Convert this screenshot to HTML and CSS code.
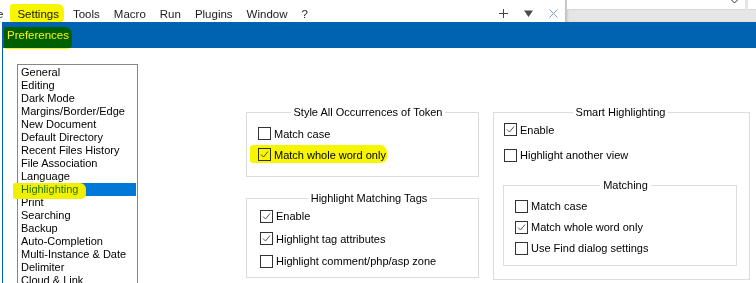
FILE: index.html
```html
<!DOCTYPE html>
<html lang="en">
<head>
    <meta charset="UTF-8">
    <title>Preferences</title>
    <link rel="stylesheet" href="styles.css">
</head>
<body>
    <div class="topbar">
        <div class="menubar">
            <span class="menu cut">e</span>
            <span class="menu marked">Settings</span>
            <span class="menu">Tools</span>
            <span class="menu">Macro</span>
            <span class="menu">Run</span>
            <span class="menu">Plugins</span>
            <span class="menu">Window</span>
            <span class="menu">?</span>
            <div class="tabtools">
                <svg width="9" height="9" viewBox="0 0 9 9"><path d="M4.5 0v9M0 4.5h9" stroke="#444" stroke-width="1"/></svg>
                <svg width="9" height="9" viewBox="0 0 9 9"><path d="M0 1.5h9L4.5 8z" fill="#4a4a4a"/></svg>
                <svg width="9" height="9" viewBox="0 0 9 9"><path d="M0.5 0.5l8 8M8.5 0.5l-8 8" stroke="#7f9fc0" stroke-width="1"/></svg>
            </div>
        </div>
        <div class="side">
            <div class="combo">
                <svg width="9" height="4" viewBox="0 0 9 4"><path d="M0.5 -1L4.5 3L8.5 -1" fill="none" stroke="#333" stroke-width="1"/></svg>
            </div>
            <div class="combo small"></div>
        </div>
    </div>

    <div class="dialog">
        <div class="titlebar"><span class="title">Preferences</span></div>
        <div class="body">
            <ul class="pagelist">
                <li>General</li>
                <li>Editing</li>
                <li>Dark Mode</li>
                <li>Margins/Border/Edge</li>
                <li>New Document</li>
                <li>Default Directory</li>
                <li>Recent Files History</li>
                <li>File Association</li>
                <li>Language</li>
                <li class="selected"><span>Highlighting</span></li>
                <li>Print</li>
                <li>Searching</li>
                <li>Backup</li>
                <li>Auto-Completion</li>
                <li>Multi-Instance &amp; Date</li>
                <li>Delimiter</li>
                <li>Cloud &amp; Link</li>
                <li>Search Engine</li>
            </ul>

            <div class="col left">
                <fieldset class="group token">
                    <legend>Style All Occurrences of Token</legend>
                    <div class="opt"><span class="box"></span>Match case</div>
                    <div class="opt marked-row"><span class="box"><svg width="11" height="11" viewBox="0 0 11 11"><path d="M2 5.5L4.5 8L9 2.5" fill="none" stroke="#555" stroke-width="1"/></svg></span>Match whole word only</div>
                </fieldset>
                <fieldset class="group tags">
                    <legend>Highlight Matching Tags</legend>
                    <div class="opt"><span class="box"><svg width="11" height="11" viewBox="0 0 11 11"><path d="M2 5.5L4.5 8L9 2.5" fill="none" stroke="#555" stroke-width="1"/></svg></span>Enable</div>
                    <div class="opt"><span class="box"><svg width="11" height="11" viewBox="0 0 11 11"><path d="M2 5.5L4.5 8L9 2.5" fill="none" stroke="#555" stroke-width="1"/></svg></span>Highlight tag attributes</div>
                    <div class="opt"><span class="box"></span>Highlight comment/php/asp zone</div>
                </fieldset>
            </div>

            <div class="col right">
                <fieldset class="group smart">
                    <legend>Smart Highlighting</legend>
                    <div class="opt"><span class="box"><svg width="11" height="11" viewBox="0 0 11 11"><path d="M2 5.5L4.5 8L9 2.5" fill="none" stroke="#555" stroke-width="1"/></svg></span>Enable</div>
                    <div class="opt second"><span class="box"></span>Highlight another view</div>
                    <fieldset class="group matching">
                        <legend>Matching</legend>
                        <div class="opt"><span class="box"></span>Match case</div>
                        <div class="opt"><span class="box"><svg width="11" height="11" viewBox="0 0 11 11"><path d="M2 5.5L4.5 8L9 2.5" fill="none" stroke="#555" stroke-width="1"/></svg></span>Match whole word only</div>
                        <div class="opt"><span class="box"></span>Use Find dialog settings</div>
                    </fieldset>
                </fieldset>
            </div>
        </div>
    </div>
</body>
</html>
```

FILE: styles.css
```css
body {
    margin: 0;
    width: 756px;
    height: 283px;
    overflow: hidden;
    background: #fff;
    font-family: "Liberation Sans", Arial, sans-serif;
    color: #000;
}

/* Top strip (main window menu) */
.topbar {
    display: flex;
    height: 22px;
}
.menubar {
    flex: none;
    width: 565px;
    box-sizing: border-box;
    height: 22px;
    padding-top: 6px;
    display: flex;
    font-size: 11.5px;
    color: #1a1a1a;
}
.menu {
    position: relative;
    padding: 0 7px;
    line-height: 16px;
}
.menu.cut {
    margin-left: -10px;
}
.menu.marked::after {
    content: "";
    position: absolute;
    left: 0;
    right: 2px;
    top: -2px;
    bottom: 0;
    background: #f8f500;
    border-radius: 3px 6px 4px 2px;
    mix-blend-mode: multiply;
}
.tabtools {
    margin-left: auto;
    margin-top: -2px;
    padding-right: 7px;
    display: flex;
    align-items: center;
    gap: 16px;
}
.side {
    flex: 1;
    min-width: 0;
    display: flex;
    gap: 3px;
    padding-left: 2px;
    background: #e6e6e6;
    box-shadow: inset 3px 0 3px -1px rgba(0, 0, 0, 0.18);
}
.combo {
    flex: none;
    width: 178px;
    height: 10px;
    background: #fff;
    border-bottom: 1px solid #d6d6d6;
    display: flex;
    justify-content: flex-end;
    align-items: flex-start;
    padding-right: 6px;
    box-sizing: border-box;
}
.combo.small {
    flex: 1;
    width: auto;
    padding: 0;
}

/* Preferences dialog */
.dialog {
    margin-left: 2px;
    border-left: 1px solid #0063b1;
}
.titlebar {
    height: 26px;
    background: #0063b1;
    padding-left: 4px;
}
.title {
    position: relative;
    display: inline-block;
    line-height: 26px;
    font-size: 11.5px;
    color: #fff;
}
.title::after {
    content: "";
    position: absolute;
    left: -3px;
    right: -3px;
    top: 5px;
    bottom: -1px;
    background: #f8f500;
    border-radius: 3px 7px 5px 2px;
    mix-blend-mode: multiply;
}

.body {
    display: flex;
    padding: 16px 0 0 14px;
}

.pagelist {
    width: 121px;
    height: 240px;
    box-sizing: border-box;
    margin: 0;
    padding: 1px;
    list-style: none;
    border: 1px solid #828790;
    font-size: 11px;
}
.pagelist li {
    height: 13px;
    line-height: 13px;
    padding-left: 2px;
    white-space: nowrap;
}
.pagelist li.selected {
    position: relative;
    background: #0078d7;
    color: #fff;
}
.pagelist li.selected::before {
    content: "";
    position: absolute;
    left: -6px;
    top: 0;
    width: 73px;
    height: 16px;
    background: #f1f000;
    border-radius: 2px 6px 5px 3px;
}
.pagelist li.selected span {
    position: relative;
    z-index: 1;
    color: #2a7510;
}

/* Group boxes */
.col {
    margin-top: 41px;
}
.col.left {
    width: 233px;
    margin-left: 108px;
}
.col.right {
    width: 257px;
    margin-left: 14px;
}
.group {
    margin: 0;
    min-width: 0;
    border: 1px solid #dcdcdc;
    font-size: 11px;
}
.group legend {
    margin: 0 auto;
    padding: 0 3px;
    line-height: 14px;
}
.token {
    padding: 4px 0 11px 11px;
}
.tags {
    margin-top: 14px;
    padding: 0 0 4.5px 13px;
}
.tags .opt {
    height: 22.5px;
}
.smart {
    padding: 0 12px 13px 10px;
}
.smart .second {
    margin-top: 4.5px;
}
.group.matching {
    margin: 12.5px 0 0 -1px;
    padding: 3.5px 0 6px 11px;
}

.opt {
    position: relative;
    display: flex;
    align-items: center;
    gap: 3px;
    height: 21px;
    white-space: nowrap;
}
.box {
    width: 13px;
    height: 13px;
    box-sizing: border-box;
    border: 1px solid #333;
    background: #fff;
    flex: none;
}
.box svg {
    display: block;
}
.marked-row::after {
    content: "";
    position: absolute;
    left: -8px;
    top: 1px;
    width: 137px;
    height: 18px;
    background: #f8f500;
    border-radius: 3px 7px 6px 3px;
    mix-blend-mode: multiply;
}
```
